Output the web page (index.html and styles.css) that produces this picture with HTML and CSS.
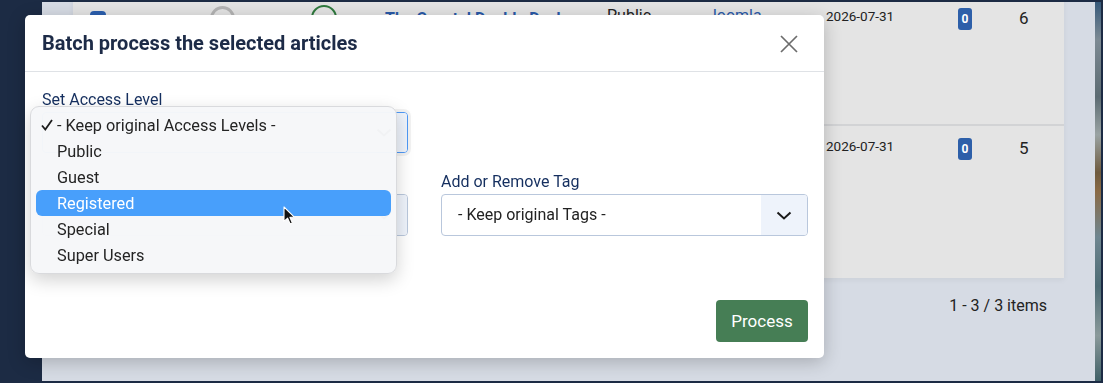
FILE: index.html
```html
<!DOCTYPE html>
<html lang="en">
<head>
  <meta charset="UTF-8">
  <title>Articles - Batch process</title>
  <link rel="stylesheet" href="styles.css">
</head>
<body>
  <div class="screen">
    <aside class="sidebar"></aside>

    <main class="content">
      <div class="table">
        <div class="row row-first">
          <div class="cell"><span class="checkbox"></span></div>
          <div class="cell"><span class="status status-off"></span></div>
          <div class="cell"><span class="status status-on"></span></div>
          <div class="cell"><a class="title-link">The Coastal Double Deck</a></div>
          <div class="cell">Public</div>
          <div class="cell"><a class="author-link">Joomla</a></div>
          <div class="cell cell-date">2026-07-31</div>
          <div class="cell"><span class="badge">0</span></div>
          <div class="cell cell-id">6</div>
        </div>
        <div class="row row-second">
          <div class="cell"><span class="checkbox"></span></div>
          <div class="cell"><span class="status status-off"></span></div>
          <div class="cell"><span class="status status-on"></span></div>
          <div class="cell"><a class="title-link">Garden Terrace</a></div>
          <div class="cell">Public</div>
          <div class="cell"><a class="author-link">Joomla</a></div>
          <div class="cell cell-date">2026-07-31</div>
          <div class="cell"><span class="badge">0</span></div>
          <div class="cell cell-id">5</div>
        </div>
      </div>
      <div class="pager">1 - 3 / 3 items</div>
    </main>

    <div class="photo-strip"></div>
  </div>

  <div class="modal">
    <div class="modal-header">
      <h2>Batch process the selected articles</h2>
      <button class="close-btn" aria-label="Close">
        <svg width="18" height="18" viewBox="0 0 18 18">
          <path d="M1 1 L17 17 M17 1 L1 17" stroke="#6c6c6c" stroke-width="1.7" fill="none"/>
        </svg>
      </button>
    </div>

    <div class="modal-body">
      <div class="field">
        <label>Set Access Level</label>
        <!-- value text is covered by the open popup -->
        <div class="select select-focus">
          <span></span>
          <span class="chevron"><svg width="16" height="9" viewBox="0 0 16 9"><path d="M1.5 1.5 L8 7.5 L14.5 1.5" stroke="#1a1a1a" stroke-width="2" fill="none"/></svg></span>
        </div>
      </div>
      <div class="field"></div>
      <div class="field">
        <label class="label-hidden"></label>
        <div class="select">
          <span></span>
          <span class="chevron"><svg width="16" height="9" viewBox="0 0 16 9"><path d="M1.5 1.5 L8 7.5 L14.5 1.5" stroke="#1a1a1a" stroke-width="2" fill="none"/></svg></span>
        </div>
      </div>
      <div class="field">
        <label>Add or Remove Tag</label>
        <div class="select">
          <span>- Keep original Tags -</span>
          <span class="chevron"><svg width="16" height="9" viewBox="0 0 16 9"><path d="M1.5 1.5 L8 7.5 L14.5 1.5" stroke="#1a1a1a" stroke-width="2" fill="none"/></svg></span>
        </div>
      </div>

      <!-- open native popup of the access level select -->
      <ul class="popup">
        <li class="option">
          <span class="check"><svg width="12" height="12" viewBox="0 0 12 12"><path d="M1 6.5 L4.3 10.5 L11 1" stroke="#1d1d1d" stroke-width="1.8" fill="none"/></svg></span>
          - Keep original Access Levels -
        </li>
        <li class="option"><span class="check"></span>Public</li>
        <li class="option"><span class="check"></span>Guest</li>
        <li class="option option-active"><span class="check"></span>Registered</li>
        <li class="option"><span class="check"></span>Special</li>
        <li class="option"><span class="check"></span>Super Users</li>
      </ul>

      <svg class="cursor" width="13" height="20" viewBox="0 0 13 20">
        <path d="M1 1 L1 15.5 L4.6 12.2 L7.2 18 L9.4 17 L6.9 11.3 L11.6 11.3 Z" fill="#111" stroke="#fff" stroke-width="1.1" stroke-linejoin="round"/>
      </svg>
    </div>

    <div class="modal-footer">
      <button class="btn-process">Process</button>
    </div>
  </div>
</body>
</html>
```

FILE: styles.css
```css
* {
  margin: 0;
  padding: 0;
  box-sizing: border-box;
  font-family: Roboto, 'Liberation Sans', sans-serif;
}

body {
  background: #1c2b44;
  width: 1103px;
  height: 383px;
  overflow: hidden;
}

.screen {
  display: flex;
  height: 383px;
  border-top: 2px solid #1c2b44;
  border-bottom: 2px solid #1c2b44;
  border-right: 2px solid #1c2b44;
}

.sidebar {
  width: 42px;
  background: #1c2b44;
}

.content {
  flex: 1;
  background: #d6dbe4;
  padding: 0 31px;
  overflow: hidden;
}

.photo-strip {
  width: 6px;
  background: linear-gradient(to bottom, #36597a 0%, #7d8a93 10%, #5c6b72 25%, #9aa3a3 35%, #6e5a3e 45%, #8a6a45 50%, #6f8690 62%, #4d6b74 75%, #8b9a9b 88%, #3f5f66 100%);
}

/* article list behind the modal */
.table {
  margin-top: -8px;
  background: #e4e4e4;
  box-shadow: 0 2px 6px rgba(0, 0, 0, 0.05);
}

.row {
  display: grid;
  grid-template-columns: 137px 101px 74px 222px 101px 118px 132px 61px 1fr;
  align-items: start;
  font-size: 16px;
  color: #222;
}

.row-first {
  height: 132px;
  padding-top: 13px;
  border-bottom: 2px solid #d2d3d5;
}

.row-second {
  height: 152px;
  padding-top: 11px;
}

.cell {
  line-height: 18px;
}

.checkbox {
  display: block;
  width: 16px;
  height: 16px;
  margin: 4px 0 0 17px;
  background: #2b5fae;
  border-radius: 4px;
}

.status {
  display: block;
  width: 25px;
  height: 25px;
  border-radius: 50%;
  margin-top: -1px;
}

.status-off {
  border: 3px solid #b4b4b4;
}

.status-on {
  border: 2px solid #2f7a3e;
  margin-top: -2px;
  width: 26px;
  height: 26px;
}

.title-link {
  font-weight: 700;
  color: #2a5aa8;
  padding-top: 3px;
  display: block;
}

.author-link {
  color: #2a5aa8;
}

.cell-date {
  font-size: 13.5px;
  color: #222;
}

.badge {
  display: inline-block;
  width: 14px;
  height: 22px;
  margin-top: 1px;
  background: #2d5fa9;
  color: #fff;
  border-radius: 3px;
  font-size: 12px;
  font-weight: 700;
  line-height: 22px;
  text-align: center;
}

.cell-id {
  font-size: 17px;
  line-height: 22px;
}

.pager {
  text-align: right;
  padding-right: 17px;
  margin-top: 16px;
  font-size: 16px;
  line-height: 24px;
  color: #222;
}

/* modal */
.modal {
  position: fixed;
  left: 25px;
  top: 15px;
  width: 799px;
  background: #fff;
  border-radius: 5px;
  box-shadow: 0 4px 18px rgba(0, 0, 0, 0.22);
}

.modal-header {
  height: 57px;
  display: flex;
  align-items: center;
  justify-content: space-between;
  padding: 0 26px 0 17px;
  border-bottom: 1px solid #dfe2e6;
}

.modal-header h2 {
  font-size: 20px;
  font-weight: 700;
  color: #1d2b47;
}

.close-btn {
  background: none;
  border: none;
  display: flex;
  padding-top: 1px;
}

.modal-body {
  position: relative;
  display: grid;
  grid-template-columns: 366px 367px;
  column-gap: 33px;
  row-gap: 17px;
  padding: 16px 16px 0 17px;
}

.field label {
  display: block;
  font-size: 16px;
  line-height: 24px;
  color: #152f5f;
}

.field .label-hidden {
  height: 24px;
}

.select {
  display: flex;
  justify-content: space-between;
  height: 42px;
  border: 1px solid #b9c7dc;
  border-radius: 4px;
  overflow: hidden;
  font-size: 16px;
  color: #222;
}

.select span:first-child {
  padding-left: 16px;
  line-height: 40px;
}

.select-focus {
  height: 41px;
  border-color: #4e98f5;
  box-shadow: 0 0 0 3px rgba(0, 0, 0, 0.05);
}

.chevron {
  width: 46px;
  background: #eef3fb;
  display: flex;
  align-items: center;
  justify-content: center;
}

.popup {
  position: absolute;
  left: 5px;
  top: 34px;
  width: 367px;
  list-style: none;
  padding: 5px 5px;
  background: rgba(246, 247, 249, 0.98);
  border: 1px solid #d9dadd;
  border-radius: 9px;
  box-shadow: 0 6px 18px rgba(0, 0, 0, 0.18);
}

.option {
  display: flex;
  align-items: center;
  height: 26px;
  padding-left: 5px;
  border-radius: 6px;
  font-size: 16.3px;
  color: #242424;
}

.check {
  width: 16px;
  display: flex;
}

.option-active {
  background: #489ffb;
  color: #fff;
}

.cursor {
  position: absolute;
  left: 258px;
  top: 134px;
}

.modal-footer {
  display: flex;
  justify-content: flex-end;
  padding: 64px 16px 16px;
}

.btn-process {
  width: 92px;
  height: 42px;
  background: #467e55;
  color: #fff;
  border: none;
  border-radius: 4px;
  font-size: 17px;
}
```
